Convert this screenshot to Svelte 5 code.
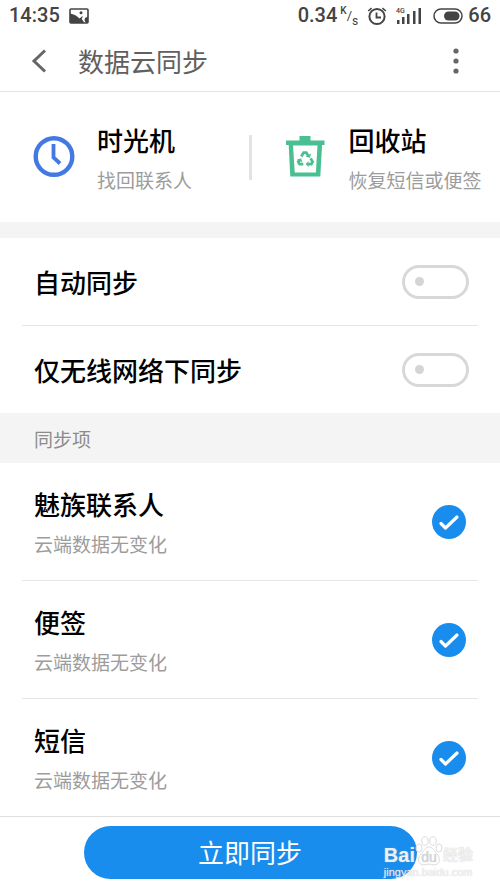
<script>
  let autoSync = $state(false)
  let wifiOnly = $state(false)

  let items = $state([
    { id: 'contacts', name: '魅族联系人', status: '云端数据无变化', checked: true },
    { id: 'notes', name: '便签', status: '云端数据无变化', checked: true },
    { id: 'sms', name: '短信', status: '云端数据无变化', checked: true },
  ])
</script>

<div class="screen">
  <div class="status">
    <span>14:35</span>
    <svg class="photo" width="20" height="16" viewBox="0 0 20 16">
      <rect x="1" y="1" width="18" height="14" rx="1" fill="none" stroke="#444" stroke-width="1.6" />
      <path d="M1 5.5C5 6 8 8 10.5 10.5L13.8 7.8 12.8 11 15.5 15H1Z M15.5 12.5 16 10 19 8.5V15H17Z" fill="#444" />
      <circle cx="12" cy="4.8" r="1.5" fill="#444" />
    </svg>
    <span class="speed">0.34</span>
    <span class="unit"><sup>K</sup>/<sub>s</sub></span>
    <svg class="alarm" width="20" height="20" viewBox="0 0 20 20" fill="none" stroke="#444">
      <circle cx="10" cy="10.5" r="7.6" stroke-width="2" />
      <path d="M9.500 6.5v5h4.5" stroke-width="1.8" />
      <path d="M1.2 5 4.6 2.2M18.8 5 15.4 2.2" stroke-width="1.6" />
    </svg>
    <svg class="signal" width="27" height="18" viewBox="0 0 27 18" fill="#444">
      <text x="0" y="6" font-size="7">4G</text>
      <rect x="1" y="13" width="2.5" height="4" />
      <rect x="6" y="10" width="2.5" height="7" />
      <rect x="11" y="7" width="2.5" height="10" />
      <rect x="17" y="4" width="2.5" height="13" />
      <rect x="22.5" y="1" width="2.5" height="16" />
    </svg>
    <svg class="battery" width="30" height="18" viewBox="0 0 30 18">
      <rect x="1" y="2" width="28" height="14" rx="7" fill="none" stroke="#444" stroke-width="1.5" />
      <rect x="11" y="4.5" width="15.5" height="9" rx="4.5" fill="#444" />
    </svg>
    <span>66</span>
  </div>

  <header>
    <button class="back" aria-label="返回">
      <svg width="16" height="24" viewBox="0 0 16 24" fill="none" stroke="#666" stroke-width="3">
        <path d="M14 1.5 3 12 14 22.5" />
      </svg>
    </button>
    <h1>数据云同步</h1>
    <button class="more" aria-label="更多">
      <svg width="6" height="28" viewBox="0 0 6 28" fill="#666">
        <circle cx="3" cy="4" r="2.6" />
        <circle cx="3" cy="14" r="2.6" />
        <circle cx="3" cy="24" r="2.6" />
      </svg>
    </button>
  </header>

  <nav>
    <button class="tool">
      <svg width="42" height="42" viewBox="0 0 42 42" fill="none" stroke="#4379e3">
        <circle cx="21" cy="20.5" r="18.3" stroke-width="4.4" />
        <path d="M20.5 8v13.5l6.5 6" stroke-width="3.8" />
      </svg>
      <span class="text">
        <span class="name">时光机</span>
        <span class="sub">找回联系人</span>
      </span>
    </button>
    <i class="rule"></i>
    <button class="tool">
      <svg width="42" height="42" viewBox="0 0 42 42">
        <path d="M14.500 0h11v4.5h14v4.5h-2.400L35.300 40.500h-30L3.700 9H1V4.500H14.500Z" fill="#49bf92" />
        <path d="M8 9.500h24.500L30.900 36.500H9.700Z" fill="#fff" />
        <g fill="none" stroke="#49bf92" stroke-width="2.8">
          <path d="M16.300 20.500l2.300-3.900h2.700l1.700 2.800" />
          <path d="M25.600 22.400l2 3.400-1.300 2.300h-3.200" />
          <path d="M18.300 28.100h-3.700l-1.300-2.300 1.200-2" />
        </g>
        <path d="M20.800 20.700l4.300 1 .8-4.200ZM23.500 25.300v5.600l-2.900-2.800ZM12 23.600l4.200-1.200 1.100 4.200Z" fill="#49bf92" />
      </svg>
      <span class="text">
        <span class="name">回收站</span>
        <span class="sub">恢复短信或便签</span>
      </span>
    </button>
  </nav>

  <section>
    <label class="setting">
      <span class="name">自动同步</span>
      <input class="switch" type="checkbox" bind:checked={autoSync} />
    </label>
    <label class="setting">
      <span class="name">仅无线网络下同步</span>
      <input class="switch" type="checkbox" bind:checked={wifiOnly} />
    </label>
  </section>

  <h2>同步项</h2>

  <section>
    {#each items as item (item.id)}
      <label class="item">
        <span class="text">
          <span class="name">{item.name}</span>
          <span class="sub">{item.status}</span>
        </span>
        <span class="tick">
          <input type="checkbox" bind:checked={item.checked} />
          {#if item.checked}
            <svg viewBox="0 0 34 34" fill="none" stroke="#fff" stroke-width="3.2" stroke-linecap="round" stroke-linejoin="round">
              <path d="M9 18.5 13.5 23 25 12" />
            </svg>
          {/if}
        </span>
      </label>
    {/each}
  </section>

  <footer>
    <button class="sync">立即同步</button>
    <div class="watermark">
      <div class="brand">
        <span>Bai</span>
        <svg width="28" height="30" viewBox="0 0 28 30">
          <g fill="#fff" fill-opacity="0.7" stroke="#dcdcdc" stroke-width="1">
            <ellipse cx="4" cy="12" rx="3" ry="4" />
            <ellipse cx="10" cy="5" rx="3.2" ry="4.3" />
            <ellipse cx="18" cy="5" rx="3.2" ry="4.3" />
            <ellipse cx="24" cy="12" rx="3" ry="4" />
            <path d="M14 11c4 0 5 4 8 7 4 4 3 11-3 11-2 0-3-1-5-1s-3 1-5 1c-6 0-7-7-3-11 3-3 4-7 8-7Z" />
          </g>
          <text x="14" y="26" text-anchor="middle" font-size="14" fill="#d4d8dc">du</text>
        </svg>
        <span class="cn">经验</span>
      </div>
      <div class="url">jingyan.baidu.com</div>
    </div>
  </footer>
</div>

<style>
  :global(body) {
    margin: 0;
    background: #fff;
  }

  .screen {
    display: flex;
    flex-direction: column;
    min-height: 100vh;
    background: #fff;
    color: #000;
    font-family: Roboto, "Noto Sans CJK SC", sans-serif;
  }

  button {
    border: 0;
    padding: 0;
    background: none;
    color: inherit;
    font: inherit;
    text-align: left;
    cursor: pointer;
  }

  svg {
    display: block;
    flex: none;
  }

  .status {
    display: flex;
    align-items: center;
    height: 31px;
    padding: 0 9px;
    color: #444;
    font-size: 20px;
    font-weight: 500;
    line-height: 31px;
  }

  .photo {
    margin-left: 9px;
  }

  .speed {
    margin-left: auto;
  }

  .unit {
    display: flex;
    align-items: center;
    height: 20px;
    margin-left: 3px;
    font-size: 13px;
    font-weight: 400;
    line-height: 20px;
  }

  .unit sup,
  .unit sub {
    font-size: 10px;
    line-height: 10px;
  }

  .unit sup {
    align-self: flex-start;
    font-weight: 500;
  }

  .unit sub {
    align-self: flex-end;
    font-size: 12px;
  }

  .alarm {
    margin-left: 9px;
  }

  .signal {
    margin-left: 9px;
  }

  .battery {
    margin: 0 5px 0 10px;
  }

  header {
    display: flex;
    align-items: center;
    height: 60px;
    padding: 0 41px 0 31px;
    border-bottom: 1px solid #e4e4e4;
  }

  h1 {
    flex: 1;
    margin: 0 0 0 31px;
    padding-bottom: 2px;
    color: #606060;
    font-size: 26px;
    font-weight: 400;
  }

  nav {
    display: flex;
    align-items: center;
    height: 130px;
    border-bottom: 16px solid #f4f4f4;
  }

  .tool {
    flex: 1;
    display: flex;
    align-items: center;
    gap: 22px;
    padding-left: 33px;
    white-space: nowrap;
  }

  .rule {
    width: 3px;
    height: 45px;
    background: #e3e3e3;
  }

  .text {
    display: flex;
    flex-direction: column;
    padding-top: 9px;
  }

  .name {
    font-size: 26px;
    font-weight: 500;
    line-height: 39px;
  }

  .sub {
    color: #9c9c9c;
    font-size: 19px;
    line-height: 39px;
  }

  .setting,
  .item {
    display: flex;
    align-items: center;
    justify-content: space-between;
    margin: 0 22px;
    padding: 0 9px 0 12px;
    border-bottom: 1px solid #e6e6e6;
  }

  .setting {
    height: 87px;
  }

  .setting .name {
    padding-top: 5px;
  }

  .item {
    height: 117px;
    padding-right: 12px;
  }

  .setting:last-child,
  .item:last-child {
    border-bottom: 0;
  }

  .switch {
    appearance: none;
    display: flex;
    align-items: center;
    box-sizing: border-box;
    width: 67px;
    height: 34px;
    margin: 0;
    padding: 0 10px;
    border: 3px solid #d8d8d8;
    border-radius: 17px;
  }

  .switch::before {
    content: "";
    width: 9px;
    height: 9px;
    border-radius: 50%;
    background: #d5d5d5;
  }

  .switch:checked {
    justify-content: flex-end;
    border-color: #198ded;
  }

  .switch:checked::before {
    background: #198ded;
  }

  h2 {
    margin: 0;
    padding: 6px 34px 0;
    background: #f4f4f4;
    color: #8c8c8c;
    font-size: 19px;
    font-weight: 400;
    line-height: 44px;
  }

  .tick {
    display: grid;
    width: 34px;
    height: 34px;
  }

  .tick > * {
    grid-area: 1 / 1;
  }

  .tick input {
    appearance: none;
    box-sizing: border-box;
    margin: 0;
    border: 3px solid #d8d8d8;
    border-radius: 50%;
  }

  .tick input:checked {
    border: 0;
    background: #198ded;
  }

  .tick svg {
    pointer-events: none;
    z-index: 1;
  }

  footer {
    position: relative;
    margin-top: auto;
    padding: 9px 0 10px;
    border-top: 1px solid #e0e0e0;
  }

  .sync {
    display: block;
    width: 66.6%;
    height: 53px;
    margin: 0 auto;
    padding-bottom: 2px;
    border-radius: 27px;
    background: #198ded;
    color: #fff;
    font-size: 26px;
    text-align: center;
  }

  .watermark {
    position: absolute;
    right: 27px;
    bottom: 10px;
    color: rgba(255, 255, 255, 0.8);
    font-family: "Liberation Sans", "Noto Sans CJK SC", sans-serif;
    text-shadow: 0 0 1px #bbb;
    pointer-events: none;
  }

  .brand {
    display: flex;
    align-items: flex-end;
    height: 30px;
    font-size: 20px;
    font-weight: 700;
    line-height: 22px;
  }

  .brand svg {
    font-weight: 400;
  }

  .cn {
    font-size: 15px;
  }

  .url {
    font-size: 11px;
    line-height: 13px;
  }
</style>
